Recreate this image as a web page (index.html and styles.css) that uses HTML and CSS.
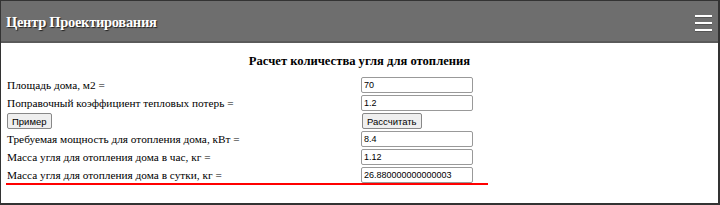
FILE: index.html
```html
<!DOCTYPE html>
<html lang="ru">
<head>
  <meta charset="UTF-8">
  <title>Центр Проектирования - Расчет количества угля</title>
  <link rel="stylesheet" href="styles.css">
</head>
<body>
  <div class="page">
    <div class="header">
      <h1>Центр Проектирования</h1>
      <div class="menu-icon">
        <span></span>
        <span></span>
        <span></span>
      </div>
    </div>
    <div class="content">
      <h3>Расчет количества угля для отопления</h3>
      <div class="calc">
        <div class="row">
          <label>Площадь дома, м2 =</label>
          <input type="text" id="area" value="70">
        </div>
        <div class="row">
          <label>Поправочный коэффициент тепловых потерь =</label>
          <input type="text" id="koef" value="1.2">
        </div>
        <div class="row">
          <div><button onclick="example()">Пример</button></div>
          <div><button onclick="calc()">Рассчитать</button></div>
        </div>
        <div class="row">
          <label>Требуемая мощность для отопления дома, кВт =</label>
          <input type="text" id="power" value="8.4">
        </div>
        <div class="row">
          <label>Масса угля для отопления дома в час, кг =</label>
          <input type="text" id="hour" value="1.12">
        </div>
        <div class="row result">
          <label>Масса угля для отопления дома в сутки, кг =</label>
          <input type="text" id="day" value="26.880000000000003">
        </div>
      </div>
    </div>
  </div>

  <script>
    function example() {
      document.getElementById('area').value = 70;
      document.getElementById('koef').value = 1.2;
    }

    function calc() {
      const area = parseFloat(document.getElementById('area').value);
      const koef = parseFloat(document.getElementById('koef').value);
      const power = area * koef / 10;
      const hour = power * 0.1333333;
      document.getElementById('power').value = power;
      document.getElementById('hour').value = hour.toFixed(2);
      document.getElementById('day').value = hour.toFixed(2) * 24;
    }
  </script>
</body>
</html>
```

FILE: styles.css
```css
html, body {
  margin: 0;
  padding: 0;
  height: 100%;
}
body {
  font-family: "Liberation Serif", "Times New Roman", serif;
  font-size: 11.3px;
  color: #000;
  background: #fff;
}
.page {
  box-sizing: border-box;
  height: 100%;
  border: 2px solid #333;
  border-left-width: 1px;
  border-top-width: 1px;
}
.header {
  height: 40px;
  background-color: #6e6e6e;
  border-bottom: 2px solid #5a5a5a;
  display: flex;
  justify-content: space-between;
  align-items: center;
  padding: 0 6px 0 5px;
}
.header h1 {
  margin: 2px 0 0;
  color: #fff;
  font-size: 14.5px;
  letter-spacing: -0.3px;
  font-weight: bold;
  text-shadow: 1px 1px 1px #222;
}
.menu-icon {
  display: flex;
  flex-direction: column;
  gap: 5px;
  padding-top: 3px;
}
.menu-icon span {
  display: block;
  width: 17px;
  height: 2px;
  background: #fff;
  box-shadow: 0 1px 0 #555;
}
.content {
  padding: 0 5px;
}
.content h3 {
  margin: 11px 0 7px;
  font-size: 12.6px;
  text-align: center;
}
.calc {
  width: 482px;
}
.row {
  display: grid;
  grid-template-columns: 355px 127px;
  align-items: center;
  height: 18px;
}
.row label {
  padding-left: 1px;
}
.row.result {
  height: 16px;
  padding-top: 1px;
  border-bottom: 2px solid red;
}
input {
  box-sizing: border-box;
  width: 112px;
  height: 16px;
  padding: 0 2px;
  font-family: "Liberation Sans", Arial, sans-serif;
  font-size: 9px;
  border: 1px solid #999;
  border-radius: 2px;
}
button {
  font-family: "Liberation Sans", Arial, sans-serif;
  font-size: 9.5px;
  height: 16px;
  padding: 0 4px;
  margin-left: 1px;
  background: #efefef;
  border: 1px solid #888;
  border-radius: 2px;
}
```
